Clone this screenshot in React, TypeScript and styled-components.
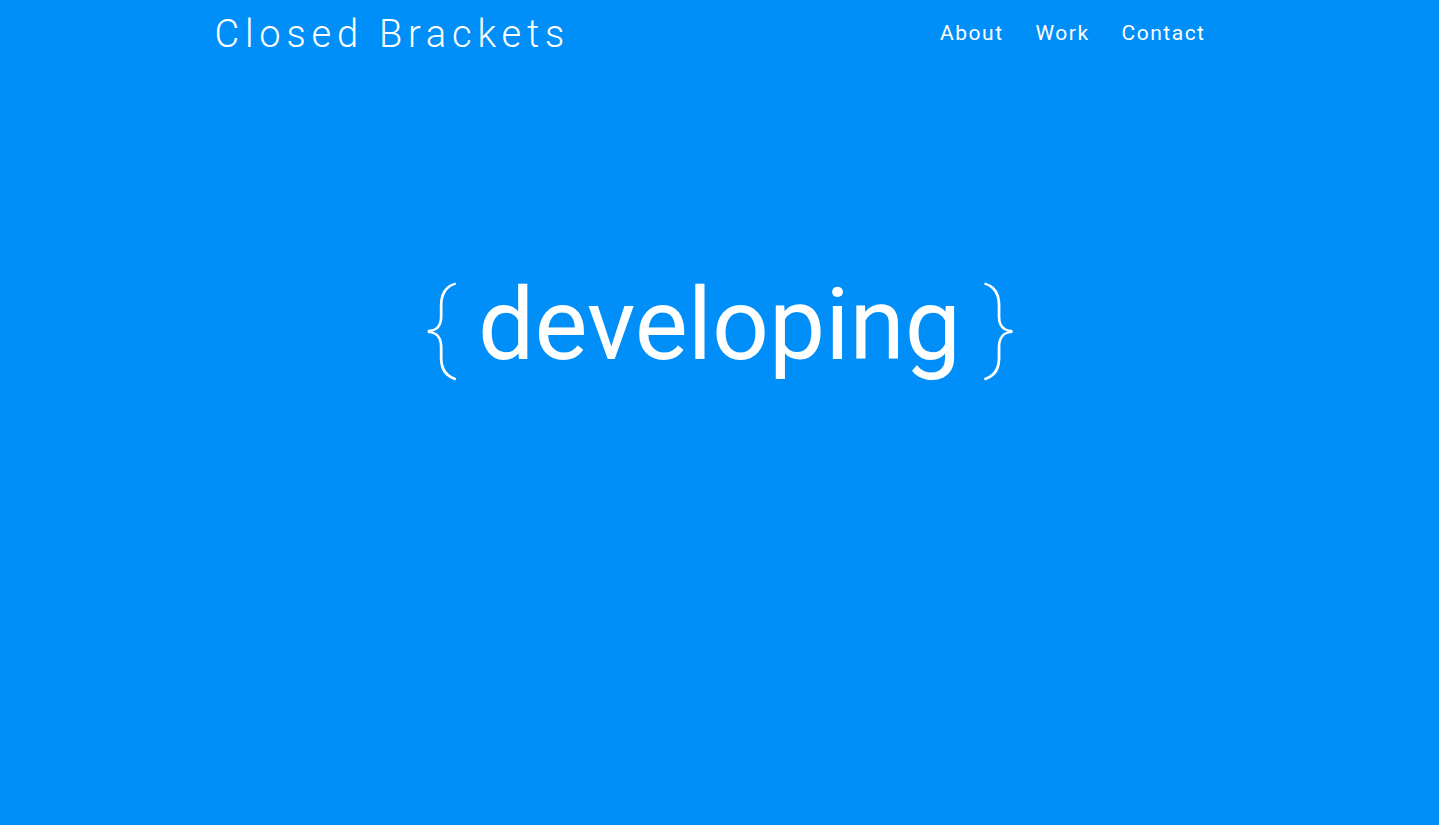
import React from "react";
import styled, { createGlobalStyle } from "styled-components";

const Global = createGlobalStyle`
  html, body { margin: 0; padding: 0; }
  body {
    background: #008ef8;
    font-family: Roboto, "Liberation Sans", sans-serif;
    color: #ffffff;
  }
`;

const Page = styled.div`
  min-height: 825px;
  background: #008ef8;
  display: flex;
  flex-direction: column;
`;

const Header = styled.header`
  width: 1010px;
  margin: 0 auto;
  display: flex;
  align-items: center;
  justify-content: space-between;
  height: 66px;
`;

const Brand = styled.a`
  font-weight: 300;
  font-size: 38px;
  letter-spacing: 5.8px;
  color: #fff;
  text-decoration: none;
  margin-top: 2px;
`;

const Nav = styled.nav`
  display: flex;
  margin-right: 3px;
`;

const NavLink = styled.a`
  font-size: 21px;
  font-weight: 400;
  letter-spacing: 1.5px;
  color: #fff;
  text-decoration: none;
  padding: 0 16px;
`;

const Hero = styled.main`
  display: flex;
  justify-content: center;
  padding-top: 209px;
`;

const Title = styled.h1`
  margin: 0;
  display: flex;
  align-items: center;
  font-size: 100px;
  font-weight: 400;
  line-height: 1;
  color: #fff;
`;

const Brace = styled.span`
  font-weight: 100;
  font-size: 99px;
  margin: 0 22px 0 23px;
`;

export default function App() {
  return (
    <>
      <Global />
      <Page>
        <Header>
          <Brand href="#">Closed Brackets</Brand>
          <Nav>
            <NavLink href="#">About</NavLink>
            <NavLink href="#">Work</NavLink>
            <NavLink href="#">Contact</NavLink>
          </Nav>
        </Header>
        <Hero>
          <Title>
            <Brace>{"{"}</Brace>
            developing
            <Brace>{"}"}</Brace>
          </Title>
        </Hero>
      </Page>
    </>
  );
}
